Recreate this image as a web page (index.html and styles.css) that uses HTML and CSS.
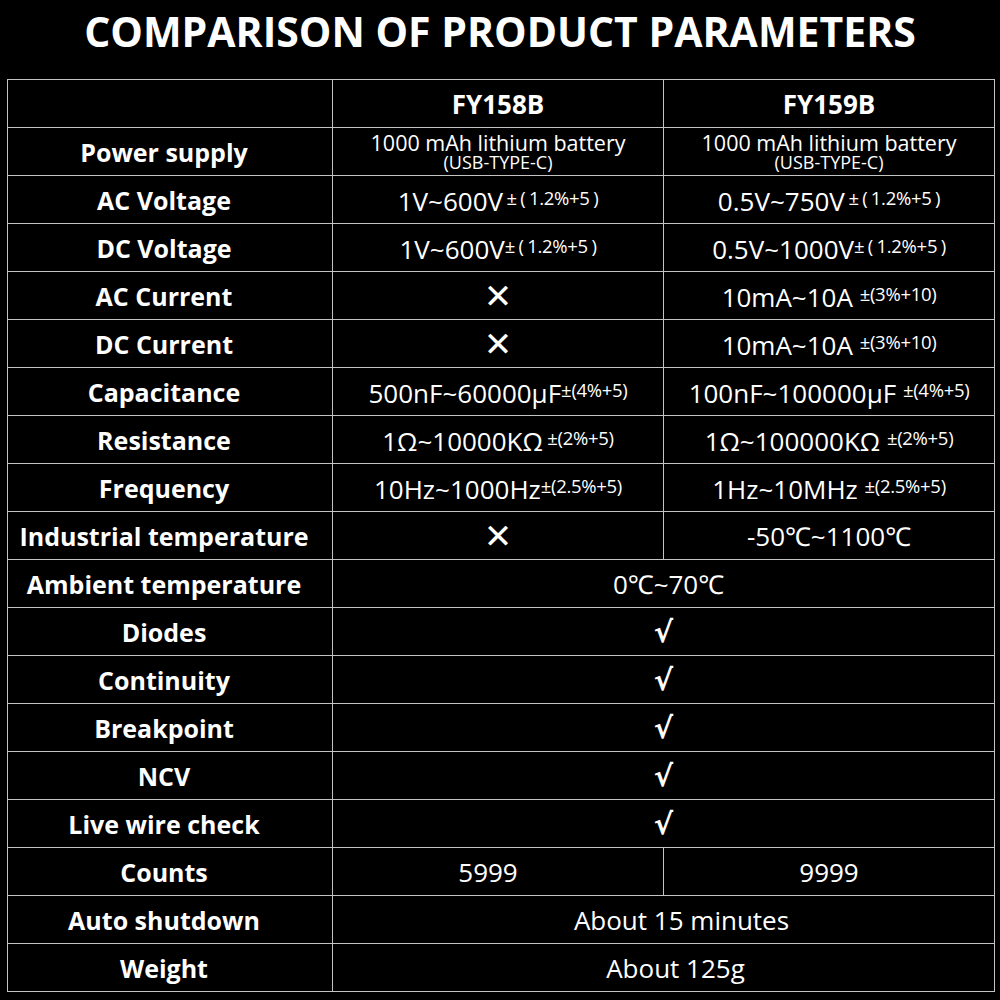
FILE: index.html
```html
<!DOCTYPE html>
<html>
<head>
<meta charset="utf-8">
<link rel="stylesheet" href="styles.css">
</head>
<body>
<h1 class="title">COMPARISON OF PRODUCT PARAMETERS</h1>
<table class="spec">
  <colgroup><col class="c1"><col class="c2"><col class="c3"></colgroup>
  <tr><th class="label"></th><th class="model">FY158B</th><th class="model">FY159B</th></tr>
  <tr><td class="label">Power supply</td>
    <td class="battery"><span class="b1">1000 mAh lithium battery</span><span class="b2">(USB-TYPE-C)</span></td>
    <td class="battery"><span class="b1">1000 mAh lithium battery</span><span class="b2">(USB-TYPE-C)</span></td></tr>
  <tr><td class="label">AC Voltage</td><td>1V~600V<span class="acc wide"> ± ( 1.2%+5 )</span></td><td>0.5V~750V<span class="acc wide"> ± ( 1.2%+5 )</span></td></tr>
  <tr><td class="label">DC Voltage</td><td>1V~600V<span class="acc wide">± ( 1.2%+5 )</span></td><td>0.5V~1000V<span class="acc wide">± ( 1.2%+5 )</span></td></tr>
  <tr><td class="label">AC Current</td><td class="mark">✕</td><td>10mA~10A <span class="acc">±(3%+10)</span></td></tr>
  <tr><td class="label">DC Current</td><td class="mark">✕</td><td>10mA~10A <span class="acc">±(3%+10)</span></td></tr>
  <tr><td class="label">Capacitance</td><td>500nF~60000μF<span class="acc">±(4%+5)</span></td><td>100nF~100000μF <span class="acc">±(4%+5)</span></td></tr>
  <tr><td class="label">Resistance</td><td>1Ω~10000KΩ<span class="acc"> ±(2%+5)</span></td><td>1Ω~100000KΩ <span class="acc"> ±(2%+5)</span></td></tr>
  <tr><td class="label">Frequency</td><td>10Hz~1000Hz<span class="acc">±(2.5%+5)</span></td><td>1Hz~10MHz <span class="acc"> ±(2.5%+5)</span></td></tr>
  <tr><td class="label">Industrial temperature</td><td class="mark">✕</td><td>-50℃~1100℃</td></tr>
  <tr><td class="label">Ambient temperature</td><td colspan="2" class="shift-s">0℃~70℃</td></tr>
  <tr><td class="label">Diodes</td><td colspan="2" class="check">√</td></tr>
  <tr><td class="label">Continuity</td><td colspan="2" class="check">√</td></tr>
  <tr><td class="label">Breakpoint</td><td colspan="2" class="check">√</td></tr>
  <tr><td class="label">NCV</td><td colspan="2" class="check">√</td></tr>
  <tr><td class="label">Live wire check</td><td colspan="2" class="check">√</td></tr>
  <tr><td class="label">Counts</td><td class="shift-l">5999</td><td>9999</td></tr>
  <tr><td class="label">Auto shutdown</td><td colspan="2" class="shift-l2">About 15 minutes</td></tr>
  <tr><td class="label">Weight</td><td colspan="2" class="shift-m">About 125g</td></tr>
</table>
</body>
</html>
```
FILE: styles.css
```css
html, body {
  margin: 0;
  padding: 0;
  background: #000;
  color: #fff;
  font-family: "Open Sans", "Noto Sans", "Liberation Sans", sans-serif;
}
.title {
  margin: 0;
  height: 79px;
  box-sizing: border-box;
  padding-top: 6px;
  text-align: center;
  font-size: 41px;
  font-weight: 700;
  line-height: 50px;
  letter-spacing: 0;
}
.spec {
  margin-left: 7px;
  width: 987px;
  table-layout: fixed;
  border-collapse: collapse;
}
.c1 { width: 325px; }
.c2 { width: 331px; }
.c3 { width: 331px; }
.spec th, .spec td {
  border: 1px solid #c4c4c4;
  height: 47px;
  padding: 0;
  text-align: center;
  vertical-align: middle;
  font-size: 26px;
  font-weight: 400;
  line-height: 30px;
  white-space: nowrap;
}
.spec .label {
  font-size: 25px;
  font-weight: 700;
  padding-right: 12px;
}
.spec .model {
  font-size: 26px;
  font-weight: 700;
}
.acc {
  font-size: 18.5px;
  vertical-align: 6px;
  letter-spacing: -0.3px;
}
.acc.wide {
  word-spacing: -1px;
}
.battery .b1, .battery .b2 {
  display: block;
}
.battery .b1 {
  font-size: 21.5px;
  line-height: 21px;
}
.battery .b2 {
  font-size: 18px;
  line-height: 18px;
}
.spec .mark {
  font-family: "DejaVu Sans", sans-serif;
  font-weight: 700;
  font-size: 34px;
}
.spec .check {
  font-family: "DejaVu Sans", sans-serif;
  font-weight: 700;
  font-size: 29px;
}
.spec .shift-s { padding-left: 10px; }
.spec .shift-m { padding-left: 24px; }
.spec .shift-l2 { padding-left: 36px; }
.spec .shift-l { padding-right: 20px; }
```
